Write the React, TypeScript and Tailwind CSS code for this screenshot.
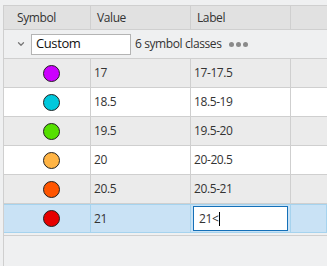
import { ChevronDown } from 'lucide-react';

type Row = { color: string; value: string; label: string };

const rows: Row[] = [
  { color: '#cc00ff', value: '17', label: '17-17.5' },
  { color: '#00c8dc', value: '18.5', label: '18.5-19' },
  { color: '#55e000', value: '19.5', label: '19.5-20' },
  { color: '#ffb444', value: '20', label: '20-20.5' },
  { color: '#ff5500', value: '20.5', label: '20.5-21' },
];

function Dot({ color }: { color: string }) {
  return (
    <span
      className="block w-[17px] h-[17px] rounded-full border border-[#222]"
      style={{ backgroundColor: color }}
    />
  );
}

export default function App() {
  return (
    <div
      className="w-[327px] h-[266px] overflow-hidden bg-[#eff0f1] pl-[3px] pt-[5px] text-[12px] tracking-[-0.4px] text-[#333]"
      style={{ fontFamily: '"Open Sans", "Noto Sans", sans-serif' }}
    >
      <div className="h-full border-l border-t border-[#cfcfcf] flex flex-col">
        {/* header */}
        <div className="flex h-[24px] bg-[#e1e1e1] border-b border-[#cfcfcf]">
          <div className="w-[87px] border-r border-[#cfcfcf] flex items-center pl-[13px]">Symbol</div>
          <div className="w-[100px] border-r border-[#cfcfcf] flex items-center pl-[6px]">Value</div>
          <div className="w-[100px] border-r border-[#cfcfcf] flex items-center pl-[6px]">Label</div>
          <div className="flex-1" />
        </div>

        {/* group row */}
        <div className="flex items-center h-[29px] border-b border-[#cfcfcf]">
          <ChevronDown className="w-[10px] h-[10px] ml-[12px] text-[#777]" strokeWidth={3} />
          <div className="ml-[5px] w-[100px] h-[21px] bg-white border border-[#b4b4b4] flex items-center pl-[4px] text-[13px] text-[#111]">
            Custom
          </div>
          <span className="ml-[4px]">6 symbol classes</span>
          <div className="ml-[8px] flex gap-[2px]">
            <span className="w-[5px] h-[5px] rounded-full bg-[#8a8a8a]" />
            <span className="w-[5px] h-[5px] rounded-full bg-[#8a8a8a]" />
            <span className="w-[5px] h-[5px] rounded-full bg-[#8a8a8a]" />
          </div>
        </div>

        {rows.map((r, i) => (
          <div
            key={r.value}
            className={`flex h-[29px] border-b border-[#cfcfcf] ${i % 2 === 0 ? 'bg-[#ebebeb]' : 'bg-white'}`}
          >
            <div className="w-[87px] border-r border-[#cfcfcf] flex items-center pl-[39px]">
              <Dot color={r.color} />
            </div>
            <div className="w-[100px] border-r border-[#cfcfcf] flex items-center pl-[3px]">{r.value}</div>
            <div className="w-[100px] border-r border-[#cfcfcf] flex items-center pl-[3px]">{r.label}</div>
            <div className="flex-1" />
          </div>
        ))}

        {/* selected row */}
        <div className="flex h-[29px] bg-[#c9e2f5] border border-l-0 border-[#a6d3ee]">
          <div className="w-[87px] border-r border-[#a6d3ee] flex items-center pl-[39px]">
            <Dot color="#e60000" />
          </div>
          <div className="w-[100px] border-r border-[#a6d3ee] flex items-center pl-[3px]">21</div>
          <div className="w-[100px] border-r border-[#a6d3ee] flex items-center px-[2px]">
            <div className="w-full h-[25px] bg-white border border-[#1570b8] flex items-center pl-[5px] text-[#333]">
              21&lt;<span className="ml-[1px] w-[1px] h-[14px] bg-black" />
            </div>
          </div>
          <div className="flex-1" />
        </div>
        <div className="mt-[2px] border-t border-[#cfcfcf]" />
      </div>
    </div>
  );
}
